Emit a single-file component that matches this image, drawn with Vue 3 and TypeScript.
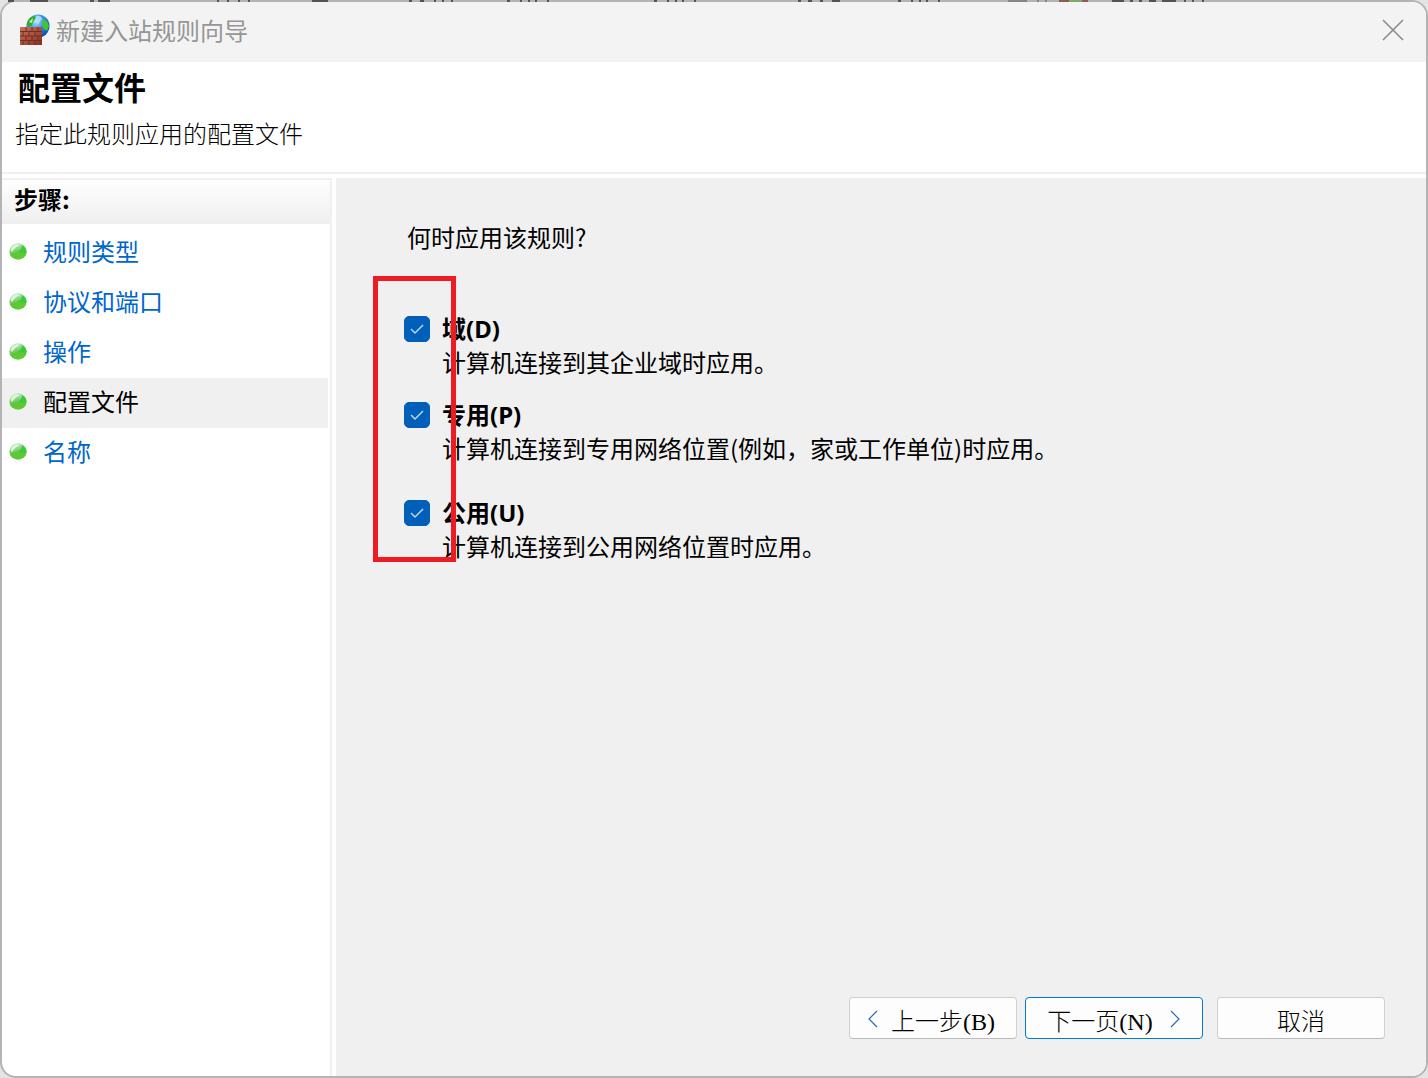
<script setup lang="ts">
import { ref } from 'vue'

interface Profile {
  id: string
  name: string
  key: string
  detail: string
}

const steps: string[] = ['规则类型', '协议和端口', '操作', '配置文件', '名称']
const current = 3

const profiles: Profile[] = [
  { id: 'domain', name: '域', key: '(D)', detail: '计算机连接到其企业域时应用。' },
  { id: 'private', name: '专用', key: '(P)', detail: '计算机连接到专用网络位置(例如，家或工作单位)时应用。' },
  { id: 'public', name: '公用', key: '(U)', detail: '计算机连接到公用网络位置时应用。' },
]
const selected = ref<string[]>(['domain', 'private', 'public'])
</script>

<template>
  <div class="backdrop">
    <div class="dialog">
      <header class="titlebar">
        <svg class="app-icon" width="32" height="32" viewBox="0 0 32 32" aria-hidden="true">
          <defs>
            <radialGradient id="globe" cx="0.4" cy="0.3" r="0.75">
              <stop offset="0" stop-color="#b5e4ff" />
              <stop offset="0.45" stop-color="#3c97e8" />
              <stop offset="1" stop-color="#0b3fa8" />
            </radialGradient>
            <linearGradient id="brick" x1="0" y1="0" x2="1" y2="1">
              <stop offset="0" stop-color="#c9745a" />
              <stop offset="1" stop-color="#84301f" />
            </linearGradient>
          </defs>
          <circle cx="20" cy="12" r="11.5" fill="url(#globe)" />
          <path d="M9 10C10 5 13 2 17 2C19 4 16 6 15 8L14 12H9Z" fill="#2fae2b" />
          <path d="M25 5Q30 7 31 12L29 17L26 15L24 10Z" fill="#42c72f" />
          <path d="M11 8L15 4L14 9Z" fill="#c4f5a0" />
          <path d="M18 2Q23 1 24 5L20 10L17 7Z" fill="#b4e6fc" opacity="0.8" />
          <rect x="2" y="13" width="22" height="18" fill="url(#brick)" />
          <path
            d="M2 17.5H24M2 22H24M2 26.5H24M8 13V17.5M14 13V17.5M20 13V17.5M5 17.5V22M11 17.5V22M17 17.5V22M8 22V26.5M14 22V26.5M20 22V26.5M5 26.5V31M11 26.5V31M17 26.5V31"
            stroke="#742f22"
            fill="none"
          />
        </svg>
        <span class="title">新建入站规则向导</span>
        <button class="close" type="button" aria-label="关闭">
          <svg width="22" height="22" viewBox="0 0 22 22">
            <path d="M1 1L21 21M21 1L1 21" stroke="#8c8c8c" stroke-width="1.6" fill="none" />
          </svg>
        </button>
      </header>

      <section class="intro">
        <h1>配置文件</h1>
        <p>指定此规则应用的配置文件</p>
      </section>

      <div class="body">
        <nav class="steps">
          <h2>步骤:</h2>
          <ul>
            <li v-for="(step, i) in steps" :key="step" :class="{ active: i === current }">
              <svg class="bullet" width="18" height="17" viewBox="0 0 18 17" aria-hidden="true">
                <defs>
                  <linearGradient id="ball" x1="0.2" y1="0" x2="0.5" y2="1">
                    <stop offset="0" stop-color="#cbeecb" />
                    <stop offset="0.3" stop-color="#9fd6a0" />
                    <stop offset="0.6" stop-color="#5cc63a" />
                    <stop offset="1" stop-color="#5fcb30" />
                  </linearGradient>
                </defs>
                <ellipse cx="9" cy="8.5" rx="8.7" ry="8.2" fill="url(#ball)" />
                <path d="M13 2Q18 5 17 10L9 9Q13 7 13 2Z" fill="#35cc35" />
                <path d="M3 4Q6 0 11 2Q6 4 3 9Q1 7 3 4Z" fill="#d9f7d9" />
              </svg>
              <span v-if="i === current">{{ step }}</span>
              <a v-else href="#">{{ step }}</a>
            </li>
          </ul>
        </nav>

        <main class="content">
          <p class="question">何时应用该规则?</p>
          <div class="options">
            <div v-for="p in profiles" :key="p.id" class="option">
              <input :id="p.id" v-model="selected" type="checkbox" :value="p.id" />
              <div class="option-text">
                <label :for="p.id">{{ p.name }}{{ p.key }}</label>
                <p>{{ p.detail }}</p>
              </div>
            </div>
            <div class="highlight"></div>
          </div>

          <footer class="actions">
            <button class="nav-button back" type="button">
              <svg width="12" height="20" viewBox="0 0 12 20"><path d="M10 2L2 10L10 18" /></svg>
              <span>上一步(B)</span>
            </button>
            <button class="nav-button primary" type="button">
              <span>下一页(N)</span>
              <svg width="12" height="20" viewBox="0 0 12 20"><path d="M2 2L10 10L2 18" /></svg>
            </button>
            <button class="nav-button cancel" type="button">取消</button>
          </footer>
        </main>
      </div>
    </div>

    <!-- Edge of the window behind the dialog -->
    <svg class="behind" width="1240" height="2" viewBox="0 0 1240 2" aria-hidden="true">
      <path
        d="M8 1H14M30 1H48M90 1H94M98 1H110M217 1H219M227 1H229M238 1H240M248 1H250M312 1H328M409 1H412M420 1H424M434 1H436M442 1H444M451 1H453M507 1H510M520 1H522M528 1H530M535 1H537M547 1H549M654 1H657M667 1H669M675 1H677M682 1H684M694 1H696M798 1H801M808 1H812M820 1H823M832 1H840M898 1H901M911 1H913M919 1H921M926 1H928M938 1H940M1112 1H1124M1130 1H1133M1139 1H1142M1149 1H1156M1162 1H1176M1184 1H1186M1192 1H1194M1202 1H1204"
        stroke="#55534f"
        stroke-width="2"
      />
      <path d="M1008 1H1027M1037 1H1039M1045 1H1047" stroke="#858585" stroke-width="2" />
      <path d="M1059 1H1069M1082 1H1088" stroke="#8a5d58" stroke-width="2" />
      <path d="M1069 1H1082" stroke="#7fa86c" stroke-width="2" />
    </svg>
  </div>
</template>

<style>
body {
  margin: 0;
}
</style>

<style scoped>
* {
  box-sizing: border-box;
}

.backdrop {
  position: relative;
  min-height: 100vh;
  display: flex;
  overflow: hidden;
  background: #e4e4e4;
  color: #000;
  font-family: "Noto Sans CJK SC", sans-serif;
  font-size: 24px;
  line-height: 32px;
}

.behind {
  position: absolute;
  top: 0;
  left: 0;
  pointer-events: none;
}

.dialog {
  flex: 1;
  display: flex;
  flex-direction: column;
  overflow: hidden;
  border: 2px solid #b4b4b4;
  border-radius: 16px;
  background: #fff;
}

h1,
h2,
p,
ul {
  margin: 0;
  padding: 0;
}

.titlebar {
  display: flex;
  align-items: center;
  height: 60px;
  padding: 0 20px 4px 16px;
  background: #f3f3f3;
}

.title {
  flex: 1;
  margin-left: 6px;
  color: #969696;
}

.close {
  display: flex;
  padding: 2px;
  border: 0;
  background: none;
}

.intro {
  height: 112px;
  padding: 4px 13px;
  border-bottom: 2px solid #f0f0f0;
}

.intro h1 {
  padding-left: 3px;
  font-size: 32px;
  line-height: 40px;
}

.intro p {
  margin-top: 11px;
  font-weight: 300;
}

.body {
  flex: 1;
  display: flex;
  margin-top: 4px;
}

.steps {
  width: 330px;
  border-top: 2px solid #f0f0f0;
  border-right: 2px solid #f0f0f0;
}

.steps h2 {
  height: 44px;
  padding: 3px 12px;
  background: linear-gradient(#fefefe, #efefef);
  font-size: 24px;
  line-height: 32px;
}

.steps ul {
  margin-top: 4px;
  list-style: none;
}

.steps li {
  display: flex;
  align-items: center;
  height: 50px;
  margin-right: 2px;
  padding: 0 0 4px 7px;
}

.steps li.active {
  background: #f0f0f0;
}

.bullet {
  margin-right: 16px;
}

.steps a {
  color: #0066cc;
  text-decoration: none;
}

.content {
  flex: 1;
  display: flex;
  flex-direction: column;
  margin-left: 4px;
  padding: 43px 41px 37px 67px;
  background: #f0f0f0;
}

.question {
  padding-left: 4px;
}

.options {
  position: relative;
  display: flex;
  flex-direction: column;
  gap: 20px;
  margin-top: 59px;
}

.option {
  display: flex;
  gap: 12px;
}

.option input {
  appearance: none;
  width: 26px;
  height: 26px;
  margin: 4px 0 0 1px;
  border: 1px solid #868686;
  border-radius: 5px;
  background: #fff;
}

.option input:checked {
  border-color: #005fb8;
  background: #005fb8 url("data:image/svg+xml,%3Csvg xmlns='http://www.w3.org/2000/svg' viewBox='0 0 24 24'%3E%3Cpath d='M6 12l4 4 8-8' fill='none' stroke='%23b8d8f4' stroke-width='1.5'/%3E%3C/svg%3E") center / 24px 24px no-repeat;
}

.option-text {
  flex: 1;
}

.option label {
  display: block;
  font-family: "Noto Sans", "Noto Sans CJK SC", sans-serif;
  font-weight: 700;
  line-height: 34px;
}

.option:nth-child(2) {
  margin-bottom: 12px;
}

.highlight {
  position: absolute;
  top: -36px;
  left: -30px;
  width: 83px;
  height: 286px;
  border: 5px solid #ed1c24;
  pointer-events: none;
}

.actions {
  display: flex;
  justify-content: flex-end;
  gap: 8px;
  margin-top: auto;
}

.nav-button {
  display: flex;
  align-items: center;
  justify-content: center;
  gap: 12px;
  width: 168px;
  height: 42px;
  padding: 2px 0 0;
  border: 1px solid #d0d0d0;
  border-bottom-color: #bababa;
  border-radius: 4px;
  background: #fdfdfd;
  color: #000;
  font-family: "Liberation Serif", "Noto Sans CJK SC", serif;
  font-size: 24px;
  font-weight: 300;
}

.nav-button.back {
  padding-right: 4px;
}

.nav-button.primary {
  gap: 16px;
  width: 178px;
  border-color: #0078d4;
}

.nav-button.cancel {
  margin-left: 6px;
}

.nav-button path {
  fill: none;
  stroke: #2b6ca8;
  stroke-width: 1.2;
}
</style>
